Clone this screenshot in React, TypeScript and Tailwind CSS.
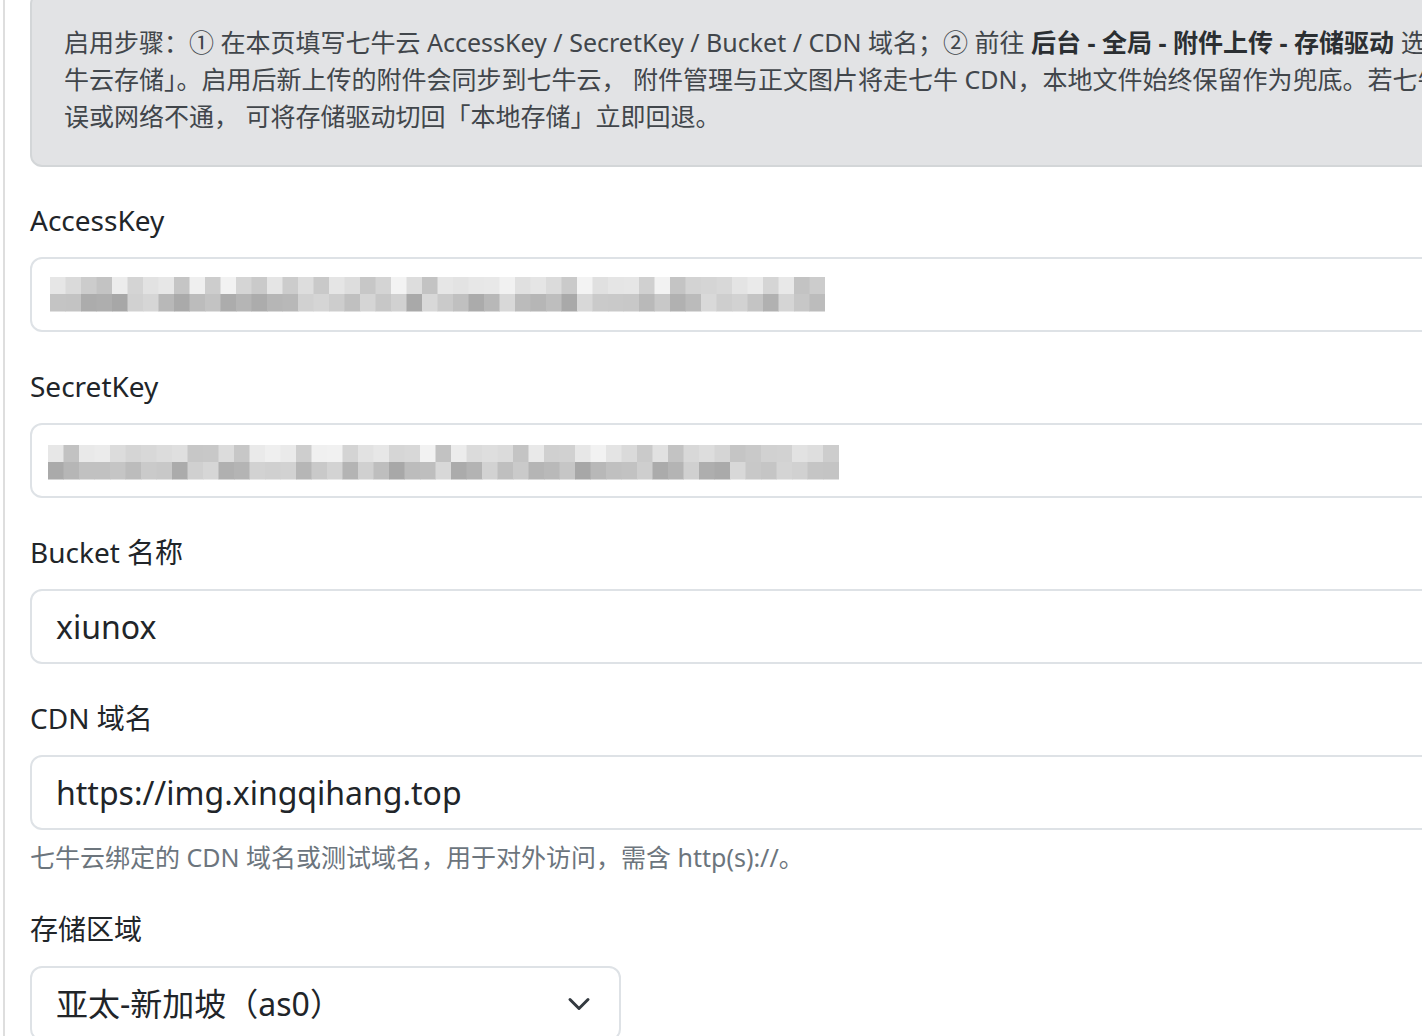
import React from "react";

const FONT = "font-['Noto_Sans','Noto_Sans_CJK_SC',sans-serif]";

// 打码后的密钥：两行灰色马赛克块
const Mosaic = ({ seed, cols }: { seed: number; cols: number }) => {
  let s = seed;
  const rnd = () => {
    s = (s * 1103515245 + 12345) % 2147483648;
    return s / 2147483648;
  };
  const rects: React.ReactNode[] = [];
  const bw = 15.5;
  for (let r = 0; r < 2; r++) {
    for (let c = 0; c < cols; c++) {
      const base = r === 0 ? 218 : 192;
      const v = Math.round(base + (rnd() - 0.5) * 50);
      const g = Math.max(155, Math.min(245, v));
      rects.push(
        <rect
          key={`${r}-${c}`}
          x={c * bw}
          y={r * 17}
          width={bw + 0.5}
          height={17.5}
          fill={`rgb(${g},${g},${g})`}
        />
      );
    }
  }
  return (
    <svg width={cols * bw} height={35} className="block blur-[0.6px]">
      {rects}
    </svg>
  );
};

const Field = ({
  label,
  children,
  help,
}: {
  label: string;
  children: React.ReactNode;
  help?: string;
}) => (
  <div className="mb-[33px]">
    <label className="block mb-[16px] text-[28px] leading-[42px] text-[#212529]">
      {label}
    </label>
    {children}
    {help && (
      <div className="mt-[9px] text-[25px] leading-[36px] text-[#6c757d]">
        {help}
      </div>
    )}
  </div>
);

const Input = ({ children }: { children: React.ReactNode }) => (
  <div className="flex h-[75px] items-center rounded-[12px] border-2 border-[#dee2e6] bg-white px-[24px] text-[32px] text-[#212529]">
    {children}
  </div>
);

export default function App() {
  return (
    <div className={`h-[1036px] w-full overflow-hidden bg-white ${FONT}`}>
      <div className="ml-[3px] w-[1640px] border-l-2 border-[#dedede] pl-[25px] pr-[40px]">

        {/* 启用说明 */}
        <div className="-mt-[8px] mb-[32px] rounded-[12px] border-2 border-[#d3d6d8] bg-[#e2e3e5] py-[30px] pl-[32px] text-[25px] leading-[37px] text-[#41464b] whitespace-nowrap">
          启用步骤：① 在本页填写七牛云 AccessKey / SecretKey / Bucket / CDN 域名；② 前往{" "}
          <b className="font-bold text-[#2b2f32]">后台 - 全局 - 附件上传 - 存储驱动</b> 选择「七
          <br />
          牛云存储」。启用后新上传的附件会同步到七牛云， 附件管理与正文图片将走七牛 CDN，本地文件始终保留作为兜底。若七牛配置错
          <br />
          误或网络不通， 可将存储驱动切回「本地存储」立即回退。
        </div>

        <Field label="AccessKey">
          <Input>
            <div className="-ml-[6px]">
              <Mosaic seed={17} cols={50} />
            </div>
          </Input>
        </Field>

        <Field label="SecretKey">
          <Input>
            <div className="-ml-[8px] mt-[4px]">
              <Mosaic seed={91} cols={51} />
            </div>
          </Input>
        </Field>

        <Field label="Bucket 名称">
          <Input>xiunox</Input>
        </Field>

        <Field
          label="CDN 域名"
          help="七牛云绑定的 CDN 域名或测试域名，用于对外访问，需含 http(s)://。"
        >
          <Input>https://img.xingqihang.top</Input>
        </Field>

        <Field label="存储区域">
          <div className="flex h-[75px] w-[591px] items-center justify-between rounded-[12px] border-2 border-[#dee2e6] bg-white pl-[24px] pr-[28px] text-[32px] text-[#212529]">
            <span>亚太-新加坡（as0）</span>
            <svg width="24" height="24" viewBox="0 0 16 16" fill="none">
              <path
                d="m2 5 6 6 6-6"
                stroke="#343a40"
                strokeWidth="2"
                strokeLinecap="round"
                strokeLinejoin="round"
              />
            </svg>
          </div>
        </Field>

      </div>
    </div>
  );
}
